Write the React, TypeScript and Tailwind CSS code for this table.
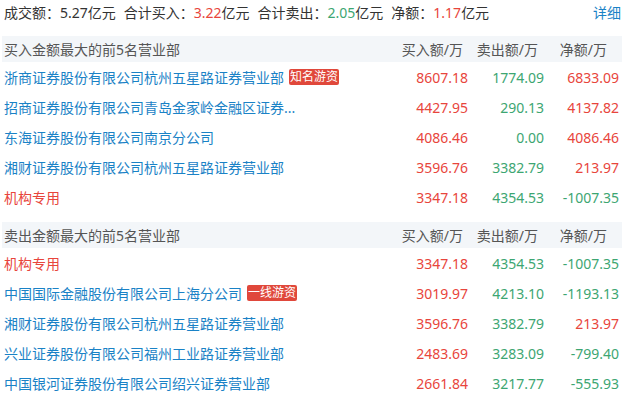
type Row = {
  name: string;
  tag?: string;
  buy: string;
  sell: string;
  net: string;
  inst?: boolean;
};

const buyTop: Row[] = [
  { name: "浙商证券股份有限公司杭州五星路证券营业部", tag: "知名游资", buy: "8607.18", sell: "1774.09", net: "6833.09" },
  { name: "招商证券股份有限公司青岛金家岭金融区证券...", buy: "4427.95", sell: "290.13", net: "4137.82" },
  { name: "东海证券股份有限公司南京分公司", buy: "4086.46", sell: "0.00", net: "4086.46" },
  { name: "湘财证券股份有限公司杭州五星路证券营业部", buy: "3596.76", sell: "3382.79", net: "213.97" },
  { name: "机构专用", inst: true, buy: "3347.18", sell: "4354.53", net: "-1007.35" },
];

const sellTop: Row[] = [
  { name: "机构专用", inst: true, buy: "3347.18", sell: "4354.53", net: "-1007.35" },
  { name: "中国国际金融股份有限公司上海分公司", tag: "一线游资", buy: "3019.97", sell: "4213.10", net: "-1193.13" },
  { name: "湘财证券股份有限公司杭州五星路证券营业部", buy: "3596.76", sell: "3382.79", net: "213.97" },
  { name: "兴业证券股份有限公司福州工业路证券营业部", buy: "2483.69", sell: "3283.09", net: "-799.40" },
  { name: "中国银河证券股份有限公司绍兴证券营业部", buy: "2661.84", sell: "3217.77", net: "-555.93" },
];

const RED = "text-[#e8453c]";
const GREEN = "text-[#3da672]";

function Section({ title, rows }: { title: string; rows: Row[] }) {
  return (
    <div>
      <div className="flex h-[26px] items-center bg-[#f3f6f9] pl-[2px] pr-[3px] text-[#555]">
        <div className="flex-1">{title}</div>
        <div className="w-[80px] pr-[5px] text-right">买入额/万</div>
        <div className="w-[76px] pr-[6px] text-right">卖出额/万</div>
        <div className="w-[75px] pr-[12px] text-right">净额/万</div>
      </div>
      {rows.map((r, i) => (
        <div key={i} className="flex h-[30px] items-center pl-[2px] pr-[3px]">
          <div className="flex flex-1 items-center whitespace-nowrap">
            <span className={r.inst ? RED : "text-[#1a82c6]"}>{r.name}</span>
            {r.tag && (
              <span className="ml-[5px] rounded-[2px] bg-[#e0483b] px-[1px] text-[12px] leading-[16px] text-white">
                {r.tag}
              </span>
            )}
          </div>
          <div className={`w-[80px] text-right ${RED}`}>{r.buy}</div>
          <div className={`w-[76px] text-right ${GREEN}`}>{r.sell}</div>
          <div className={`w-[75px] text-right ${r.net.startsWith("-") ? GREEN : RED}`}>{r.net}</div>
        </div>
      ))}
    </div>
  );
}

export default function App() {
  return (
    <div
      className="w-[630px] bg-white pl-[2px] pr-[8px] text-[14px] text-[#333]"
      style={{ fontFamily: '"Noto Sans", "Noto Sans CJK SC", sans-serif' }}
    >
      <div className="flex h-[24px] items-center gap-[8px] pl-[2px] pr-[1px]">
        <span>
          成交额：5.27亿元
        </span>
        <span>
          合计买入：<span className={RED}>3.22</span>亿元
        </span>
        <span>
          合计卖出：<span className={GREEN}>2.05</span>亿元
        </span>
        <span>
          净额：<span className={RED}>1.17</span>亿元
        </span>
        <span className="ml-auto text-[#1a82c6]">详细</span>
      </div>
      <div className="mt-[12px]">
        <Section title="买入金额最大的前5名营业部" rows={buyTop} />
      </div>
      <div className="mt-[10px]">
        <Section title="卖出金额最大的前5名营业部" rows={sellTop} />
      </div>
    </div>
  );
}
